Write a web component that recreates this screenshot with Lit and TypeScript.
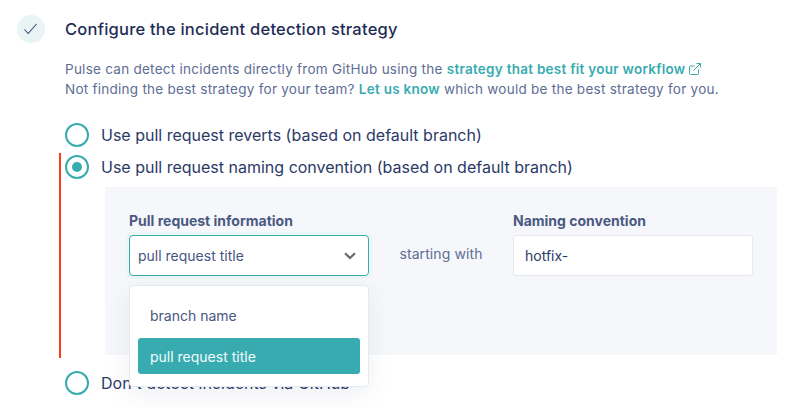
import { LitElement, html, css } from "lit";
import { customElement } from "lit/decorators.js";

@customElement("app-root")
export class AppRoot extends LitElement {
  static styles = css`
    :host {
      display: block;
      width: 800px;
      height: 408px;
      overflow: hidden;
      background: #fff;
      font-family: Inter, "Liberation Sans", sans-serif;
      color: #2b3a67;
    }

    .step {
      display: flex;
      gap: 20px;
      padding: 15px 0 0 17px;
    }

    .check {
      width: 28px;
      height: 28px;
      border-radius: 50%;
      background: #e9f4f5;
      display: flex;
      align-items: center;
      justify-content: center;
      flex: none;
    }

    .body {
      width: 712px;
      flex: none;
    }

    h2 {
      margin: 0;
      height: 28px;
      font-size: 16.5px;
      line-height: 28px;
      font-weight: 500;
      letter-spacing: 0.22px;
      color: #1f2d56;
    }

    .desc {
      margin: 16px 0 0;
      font-size: 13.5px;
      line-height: 20px;
      letter-spacing: 0.26px;
      color: #5d6d94;
    }

    .desc a {
      color: #38abb1;
      font-weight: 600;
      text-decoration: none;
    }

    .desc svg {
      vertical-align: -1px;
    }

    .options {
      position: relative;
      margin-top: 24px;
    }

    .trail {
      position: absolute;
      left: -6px;
      top: 30px;
      width: 2px;
      height: 205px;
      background: #ff3a1a;
    }

    .option {
      display: flex;
      align-items: center;
      gap: 12px;
      height: 24px;
      margin-bottom: 8px;
      font-size: 16px;
      color: #2b3a67;
      white-space: nowrap;
    }

    .radio {
      width: 24px;
      height: 24px;
      box-sizing: border-box;
      border: 2px solid #38abb1;
      border-radius: 50%;
      display: flex;
      align-items: center;
      justify-content: center;
      flex: none;
    }

    .radio.on::after {
      content: "";
      width: 10px;
      height: 10px;
      border-radius: 50%;
      background: #38abb1;
    }

    .panel {
      margin: 0 0 16px 40px;
      width: 672px;
      height: 168px;
      box-sizing: border-box;
      padding: 26px 24px 0;
      background: #f6f7fa;
      display: flex;
      align-items: flex-start;
    }

    .field {
      position: relative;
      width: 240px;
      flex: none;
    }

    label {
      display: block;
      height: 16px;
      margin-bottom: 6px;
      font-size: 14px;
      line-height: 16px;
      font-weight: 700;
      color: #4a5982;
    }

    .select {
      height: 41px;
      box-sizing: border-box;
      padding: 0 12px 0 8px;
      display: flex;
      align-items: center;
      justify-content: space-between;
      background: #fff;
      border: 1px solid #38abb1;
      border-radius: 4px;
      box-shadow: 0 0 0 3px #eaf5f6;
      font-size: 14px;
      color: #47567f;
    }

    .menu {
      position: absolute;
      left: 0;
      right: 0;
      top: 72px;
      height: 102px;
      box-sizing: border-box;
      padding: 11px 8px;
      background: #fff;
      border: 1px solid #e6e9f4;
      border-radius: 4px;
      box-shadow: 0 8px 24px rgba(43, 58, 103, 0.08);
      font-size: 14px;
      color: #47567f;
    }

    .item {
      height: 36px;
      padding-left: 12px;
      display: flex;
      align-items: center;
      border-radius: 3px;
    }

    .item + .item {
      margin-top: 5px;
    }

    .item.active {
      background: #38abb1;
      color: #f2fbfb;
    }

    .joiner {
      width: 144px;
      height: 38px;
      margin-top: 21px;
      flex: none;
      display: flex;
      align-items: center;
      justify-content: center;
      font-size: 14px;
      letter-spacing: 0.1px;
      color: #5d6d94;
    }

    .input {
      height: 41px;
      box-sizing: border-box;
      padding: 0 11px;
      display: flex;
      align-items: center;
      background: #fff;
      border: 1px solid #e6e9f4;
      border-radius: 3px;
      font-size: 14px;
      color: #2b3a67;
    }
  `;

  render() {
    return html`
      <div class="step">
        <div class="check">
          <svg width="14" height="12" viewBox="0 0 14 12" fill="none">
            <path d="M0.5 6.5 L4.2 10.5 L12.5 1" stroke="#3d4a72" stroke-width="1.1" />
          </svg>
        </div>
        <div class="body">
          <h2>Configure the incident detection strategy</h2>
          <p class="desc">
            Pulse can detect incidents directly from GitHub using the
            <a>strategy that best fit your workflow</a>
            <svg width="12" height="12" viewBox="0 0 12 12" fill="none" stroke="#38abb1" stroke-width="1">
              <path d="M9.5 6.5 V10.5 a1 1 0 0 1 -1 1 H1.5 a1 1 0 0 1 -1 -1 V4 a1 1 0 0 1 1 -1 H5.5" />
              <path d="M4.5 7.5 L11.5 0.5 M7.5 0.5 H11.5 V4.5" />
            </svg>
            <br />
            Not finding the best strategy for your team?
            <a>Let us know</a> which would be the best strategy for you.
          </p>
          <div class="options">
            <div class="trail"></div>
            <div class="option">
              <span class="radio"></span>
              Use pull request reverts (based on default branch)
            </div>
            <div class="option">
              <span class="radio on"></span>
              Use pull request naming convention (based on default branch)
            </div>
            <div class="panel">
              <div class="field">
                <label>Pull request information</label>
                <div class="select">
                  pull request title
                  <svg width="12" height="8" viewBox="0 0 12 8" fill="none">
                    <path d="M1 1.2 L6 6 L11 1.2" stroke="#666a73" stroke-width="2.2" />
                  </svg>
                </div>
                <div class="menu">
                  <div class="item">branch name</div>
                  <div class="item active">pull request title</div>
                </div>
              </div>
              <div class="joiner">starting with</div>
              <div class="field">
                <label>Naming convention</label>
                <div class="input">hotfix-</div>
              </div>
            </div>
            <div class="option">
              <span class="radio"></span>
              Don't detect incidents via GitHub
            </div>
          </div>
        </div>
      </div>
    `;
  }
}
